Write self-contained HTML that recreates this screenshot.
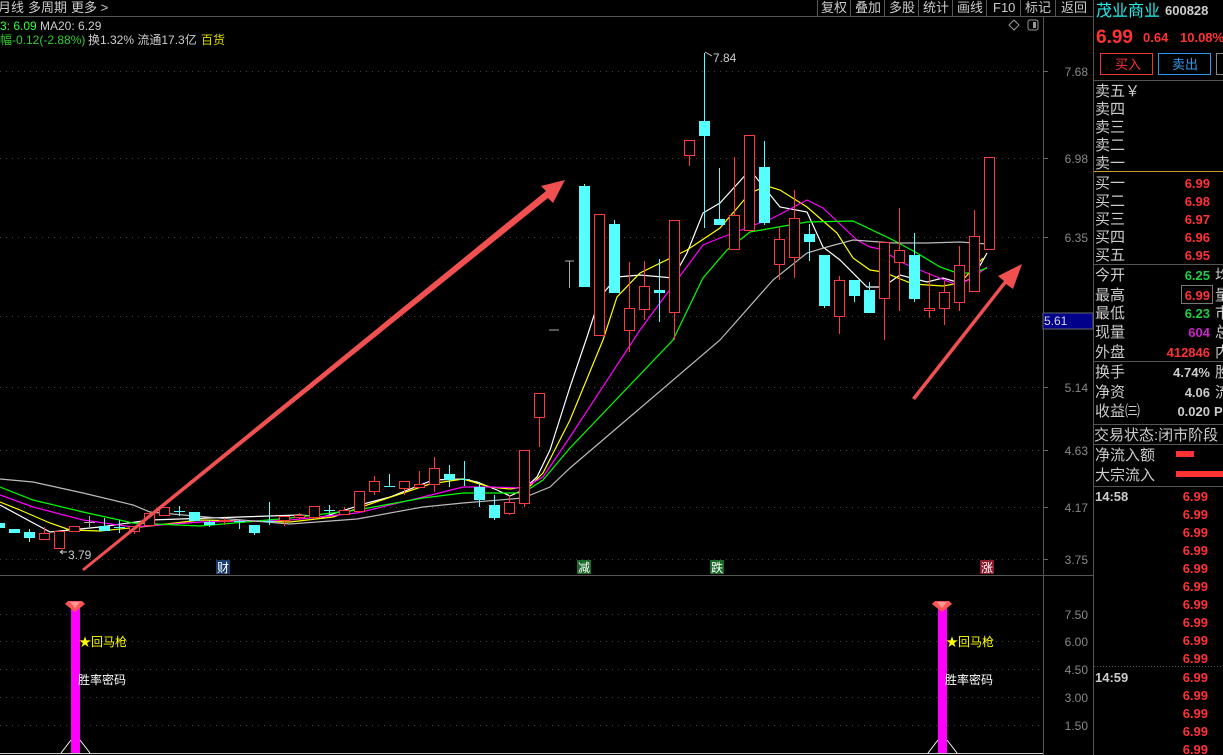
<!DOCTYPE html>
<html><head><meta charset="utf-8"><style>
body{margin:0;background:#000;width:1223px;height:755px;overflow:hidden;font-family:"Liberation Sans","Noto Sans CJK SC",sans-serif;}
svg{position:absolute;left:0;top:0}
text{font-family:"Liberation Sans","Noto Sans CJK SC",sans-serif}
</style></head><body>
<svg id="s" width="1223" height="755" xmlns="http://www.w3.org/2000/svg">
<rect width="1223" height="755" fill="#000"/>
<!-- top bar -->
<line x1="0" y1="16.5" x2="1093" y2="16.5" stroke="#555"/>
<g fill="#ccc" font-size="13">
<text x="-2" y="12">月线</text><text x="28" y="12">多周期</text><text x="71" y="12">更多 &gt;</text>
<text x="821" y="12">复权</text><text x="855" y="12">叠加</text><text x="889" y="12">多股</text><text x="923" y="12">统计</text><text x="957" y="12">画线</text><text x="993" y="12">F10</text><text x="1025" y="12">标记</text><text x="1061" y="12">返回</text>
</g>
<g stroke="#555"><line x1="817.5" y1="0" x2="817.5" y2="16"/><line x1="850.5" y1="0" x2="850.5" y2="16"/><line x1="884.5" y1="0" x2="884.5" y2="16"/><line x1="918.5" y1="0" x2="918.5" y2="16"/><line x1="952.5" y1="0" x2="952.5" y2="16"/><line x1="986.5" y1="0" x2="986.5" y2="16"/><line x1="1020.5" y1="0" x2="1020.5" y2="16"/><line x1="1055.5" y1="0" x2="1055.5" y2="16"/></g>
<path d="M1014 20 l5 5 l-5 5 l-5 -5z" fill="none" stroke="#999"/>
<rect x="1028" y="20" width="10" height="10" rx="2" fill="none" stroke="#999"/><rect x="1033" y="22" width="3" height="6" fill="#999"/>
<text x="0" y="30" font-size="12" fill="#3f3">3: 6.09</text><text x="40" y="30" font-size="12" fill="#ccc">MA20: 6.29</text>
<text x="0" y="44" font-size="12" fill="#3c3">幅-0.12(-2.88%)</text><text x="88" y="44" font-size="12" fill="#ccc">换1.32% 流通17.3亿</text><text x="201" y="44" font-size="12" fill="#dd0">百货</text>
<!-- axes -->
<line x1="1043.5" y1="17" x2="1043.5" y2="755" stroke="#555"/>
<line x1="1093.5" y1="0" x2="1093.5" y2="755" stroke="#555"/>
<line x1="0" y1="575.5" x2="1093" y2="575.5" stroke="#555"/>
<g stroke="#444" stroke-dasharray="1,5">
<line x1="0" y1="71.5" x2="1043" y2="71.5"/><line x1="0" y1="158.5" x2="1043" y2="158.5"/><line x1="0" y1="237.5" x2="1043" y2="237.5"/><line x1="0" y1="316.5" x2="1043" y2="316.5"/><line x1="0" y1="387.5" x2="1043" y2="387.5"/><line x1="0" y1="450.5" x2="1043" y2="450.5"/><line x1="0" y1="507.5" x2="1043" y2="507.5"/><line x1="0" y1="559.5" x2="1043" y2="559.5"/>
<line x1="0" y1="614.5" x2="1043" y2="614.5"/><line x1="0" y1="641.5" x2="1043" y2="641.5"/><line x1="0" y1="669.5" x2="1043" y2="669.5"/><line x1="0" y1="697.5" x2="1043" y2="697.5"/><line x1="0" y1="725.5" x2="1043" y2="725.5"/>
</g>
<g stroke="#666"><line x1="1043" y1="71.5" x2="1048" y2="71.5"/><line x1="1043" y1="158.5" x2="1048" y2="158.5"/><line x1="1043" y1="237.5" x2="1048" y2="237.5"/><line x1="1043" y1="387.5" x2="1048" y2="387.5"/><line x1="1043" y1="450.5" x2="1048" y2="450.5"/><line x1="1043" y1="507.5" x2="1048" y2="507.5"/><line x1="1043" y1="559.5" x2="1048" y2="559.5"/></g>
<g fill="#888" font-size="12" text-anchor="end">
<text x="1088" y="76">7.68</text><text x="1088" y="163">6.98</text><text x="1088" y="242">6.35</text><text x="1088" y="392">5.14</text><text x="1088" y="455">4.63</text><text x="1088" y="512">4.17</text><text x="1088" y="564">3.75</text>
<text x="1088" y="619">7.50</text><text x="1088" y="646">6.00</text><text x="1088" y="674">4.50</text><text x="1088" y="702">3.00</text><text x="1088" y="730">1.50</text>
</g>
<rect x="1043" y="313" width="50" height="16" fill="#00008a" stroke="#666"/><text x="1044" y="325" font-size="12" fill="#ddd">5.61</text>
<g id="ma" fill="none" stroke-width="1.2"></g>
<g id="cd"></g>
<text x="713" y="62" font-size="12" fill="#ccc">7.84</text><path d="M705 52 l7 4" stroke="#ccc"/>
<text x="68" y="559" font-size="12" fill="#ccc">3.79</text><path d="M60 552 h7 M60 552 l3 -2 M60 552 l3 2" stroke="#ccc" fill="none"/>
<!-- arrows -->
<g fill="#f05050" stroke="none">
<path d="M82 569 L84 571 L548 198 L553 203 L565 180 L541 186 L546 191 Z"/>
<path d="M912 398 L915 400 L1006 284 L1013 289 L1022 264 L998 276 L1004 281 Z"/>
</g>
<!-- markers -->
<rect x="216" y="560" width="14" height="14" fill="#1a3a6a"/><text x="217" y="572" font-size="12" fill="#fff">财</text>
<rect x="577" y="560" width="14" height="14" fill="#1a6a2a"/><text x="578" y="572" font-size="12" fill="#fff">减</text>
<rect x="710" y="560" width="14" height="14" fill="#1a6a2a"/><text x="711" y="572" font-size="12" fill="#fff">跌</text>
<rect x="980" y="560" width="14" height="14" fill="#8a1a2a"/><text x="981" y="572" font-size="12" fill="#fff">涨</text>
<!-- bottom indicator -->
<line x1="0" y1="753.5" x2="1043" y2="753.5" stroke="#ccc"/>
<g>
<rect x="71" y="607" width="9" height="146" fill="#f0f"/>
<path d="M61 753 L71 740 M80 740 L90 753" stroke="#fff"/>
<path d="M68 601 h14 l3 3 l-10 8 l-10 -8z" fill="#f55"/><path d="M70 602 h10 l-5 6z" fill="#f99"/>
<text x="79" y="646" font-size="12" fill="#ff0">★回马枪</text><text x="78" y="684" font-size="12" fill="#fff">胜率密码</text>
<rect x="938" y="607" width="9" height="146" fill="#f0f"/>
<path d="M928 753 L938 740 M947 740 L957 753" stroke="#fff"/>
<path d="M935 601 h14 l3 3 l-10 8 l-10 -8z" fill="#f55"/><path d="M937 602 h10 l-5 6z" fill="#f99"/>
<text x="946" y="646" font-size="12" fill="#ff0">★回马枪</text><text x="945" y="684" font-size="12" fill="#fff">胜率密码</text>
</g>
<!-- right panel -->
<text x="1096" y="16" font-size="16" fill="#2ee">茂业商业</text><text x="1165" y="15" font-size="13" font-weight="bold" fill="#ccc">600828</text>
<text x="1096" y="43" font-size="19" font-weight="bold" fill="#f33">6.99</text><text x="1143" y="42" font-size="13" font-weight="bold" fill="#f33">0.64</text><text x="1180" y="42" font-size="13" font-weight="bold" fill="#f33">10.08%</text>
<rect x="1100.5" y="53.5" width="52" height="21" fill="none" stroke="#e33"/><text x="1115" y="69" font-size="13" fill="#f33">买入</text>
<rect x="1158.5" y="53.5" width="52" height="21" fill="none" stroke="#39e"/><text x="1172" y="69" font-size="13" fill="#39e">卖出</text>
<rect x="1216.5" y="53.5" width="10" height="21" fill="none" stroke="#888"/>
<g stroke="#555"><line x1="1094" y1="80.5" x2="1223" y2="80.5"/><line x1="1094" y1="264.5" x2="1223" y2="264.5"/><line x1="1094" y1="361.5" x2="1223" y2="361.5"/><line x1="1094" y1="424.5" x2="1223" y2="424.5"/><line x1="1094" y1="444.5" x2="1223" y2="444.5"/><line x1="1094" y1="486.5" x2="1223" y2="486.5"/></g>
<line x1="1094" y1="171.5" x2="1223" y2="171.5" stroke="#c93"/>
<line x1="1094" y1="666.5" x2="1223" y2="666.5" stroke="#555" stroke-dasharray="1,2"/>
<g fill="#ccc" font-size="15">
<text x="1095" y="96">卖五￥</text><text x="1095" y="114">卖四</text><text x="1095" y="132">卖三</text><text x="1095" y="150">卖二</text><text x="1095" y="168">卖一</text>
<text x="1095" y="188">买一</text><text x="1095" y="206">买二</text><text x="1095" y="224">买三</text><text x="1095" y="242">买四</text><text x="1095" y="260">买五</text>
<text x="1095" y="280">今开</text><text x="1095" y="300">最高</text><text x="1095" y="318">最低</text><text x="1095" y="337">现量</text><text x="1095" y="357">外盘</text>
<text x="1095" y="377">换手</text><text x="1095" y="397">净资</text><text x="1095" y="416">收益㈢</text>
<text x="1094" y="440">交易状态:闭市阶段</text>
<text x="1095" y="460">净流入额</text><text x="1095" y="480">大宗流入</text>
<text x="1215" y="280">均</text><text x="1215" y="300">量</text><text x="1215" y="318">市</text><text x="1215" y="337">总</text><text x="1215" y="357">内</text><text x="1215" y="377">股</text><text x="1215" y="397">流</text>
</g>
<text x="1214" y="416" font-size="13" font-weight="bold" fill="#ccc">P</text>
<g font-size="13" font-weight="bold" text-anchor="end">
<text x="1210" y="188" fill="#f33">6.99</text><text x="1210" y="206" fill="#f33">6.98</text><text x="1210" y="224" fill="#f33">6.97</text><text x="1210" y="242" fill="#f33">6.96</text><text x="1210" y="260" fill="#f33">6.95</text>
<text x="1210" y="280" fill="#2c4">6.25</text><text x="1210" y="300" fill="#f33">6.99</text><text x="1210" y="318" fill="#2c4">6.23</text><text x="1210" y="337" fill="#c2c">604</text><text x="1210" y="357" fill="#f33">412846</text>
<text x="1210" y="377" fill="#ccc">4.74%</text><text x="1210" y="397" fill="#ccc">4.06</text><text x="1210" y="416" fill="#ccc">0.020</text>
</g>
<rect x="1181.5" y="285.5" width="31" height="18" fill="none" stroke="#777"/>
<rect x="1176" y="451" width="18" height="6" fill="#f33"/><rect x="1176" y="471" width="47" height="6" fill="#f33"/>
<g id="tk" font-size="13" font-weight="bold"></g>
</svg>
<script>
var NS="http://www.w3.org/2000/svg",s=document.getElementById('s');
function el(p,t,a){var e=document.createElementNS(NS,t);for(var k in a)e.setAttribute(k,a[k]);p.appendChild(e);return e;}
var cd=document.getElementById('cd');
var C=[[-1,523,528,523,528,'c'],[14,529,533,529,533,'c'],[29,532,538,529,542,'c'],[44,533,539,527,539,'r'],[59,531,548,531,548,'r'],[74,526,531,526,531,'r'],[89,522,523,516,527,'w'],[104,526,531,518,531,'c'],[119,527,528,520,533,'c'],[134,526,531,526,534,'r'],[149,513,525,513,525,'r'],[164,507,515,507,515,'r'],[179,511,512,506,516,'c'],[194,512,521,512,521,'c'],[209,522,525,520,527,'c'],[224,520,521,518,525,'r'],[239,521,522,520,529,'c'],[254,525,533,525,535,'c'],[269,521,522,502,525,'c'],[284,516,520,516,526,'r'],[299,515,517,513,519,'r'],[314,506,517,506,517,'r'],[329,510,511,505,515,'c'],[344,510,514,507,514,'r'],[359,491,511,491,511,'r'],[374,481,491,476,495,'r'],[389,486,487,474,487,'c'],[404,481,488,481,495,'r'],[419,484,487,471,487,'r'],[434,468,484,457,492,'r'],[449,474,480,465,487,'c'],[464,479,480,461,486,'c'],[479,487,500,482,507,'c'],[494,505,518,495,520,'c'],[509,502,513,495,515,'r'],[524,450,503,450,507,'r'],[539,393,417,393,447,'r'],
[584,186,287,184,287,'c'],[599,214,335,214,335,'r'],[614,224,293,220,293,'c'],[629,308,330,262,352,'r'],[644,286,309,261,320,'r'],[659,290,293,259,322,'c'],[674,220,312,220,340,'r'],[689,140,155,140,166,'r'],[704,121,136,53,228,'c'],[719,219,225,168,225,'c'],[734,215,249,157,249,'r'],[749,135,230,135,230,'r'],[764,167,223,141,225,'c'],[779,239,264,227,280,'r'],[794,218,257,190,278,'r'],[809,234,242,224,261,'c'],[824,255,306,255,308,'c'],[839,280,316,276,334,'r'],[854,280,296,280,302,'c'],[869,290,313,282,313,'c'],[884,242,298,242,340,'r'],[899,250,262,208,311,'r'],[914,255,299,233,302,'c'],[929,308,310,273,318,'r'],[944,292,308,281,325,'r'],[959,265,302,246,311,'r'],[974,236,291,210,292,'r'],[989,157,249,157,249,'r']];
C.forEach(function(c){var x=c[0],col=c[5]=='r'?'#ff3a3a':c[5]=='c'?'#55ffff':'#aaa';
el(cd,'line',{x1:x+.5,x2:x+.5,y1:c[3],y2:c[4],stroke:col});
var h=Math.max(1,c[2]-c[1]);
if(c[5]=='r')el(cd,'rect',{x:x-4.5,y:c[1]+.5,width:10,height:h,fill:'#000',stroke:col});
else el(cd,'rect',{x:x-5,y:c[1],width:11,height:h,fill:col});});
el(cd,'path',{d:'M565 261h9M569.5 261v27M549 330h10',stroke:'#aaa',fill:'none'});
var ma=document.getElementById('ma');
var L={'#fff':[[0,505],[50,532],[100,527],[150,520],[300,515],[323,517],[367,503],[390,497],[433,480],[463,479],[477,482],[497,490],[510,496],[523,490],[537,477],[550,450],[570,387],[587,337],[600,297],[617,277],[640,275],[673,278],[687,253],[703,213],[720,203],[750,170],[780,207],[807,212],[823,247],[840,260],[867,287],[883,287],[900,275],[927,282],[943,278],[960,283],[973,278],[987,253]],
'#ff0':[[0,502],[20,510],[50,523],[70,530],[100,531],[150,526],[200,520],[290,522],[333,517],[373,503],[430,484],[463,479],[490,487],[510,489],[530,486],[543,473],[570,420],[603,340],[617,297],[640,273],[687,250],[720,228],[750,193],[767,186],[780,190],[807,207],[837,233],[853,258],[870,270],[883,272],[913,284],[943,286],[960,283],[983,258]],
'#f0f':[[0,495],[33,507],[83,520],[133,527],[200,522],[290,520],[357,513],[423,497],[463,487],[490,487],[523,488],[543,477],[570,437],[640,330],[657,307],[703,245],[720,238],[773,218],[807,200],[823,208],[857,240],[870,247],[880,249],[903,263],[927,273],[957,285],[973,278],[987,267]],
'#0f0':[[0,487],[33,500],[83,512],[133,523],[200,526],[290,518],[357,510],[423,498],[463,493],[523,493],[543,480],[570,448],[673,340],[703,278],[727,250],[750,232],[807,222],[853,221],[893,240],[917,253],[940,267],[957,273],[973,273],[987,268]],
'#bbb':[[0,479],[33,482],[83,493],[133,505],[150,512],[183,515],[290,524],[357,519],[423,507],[463,503],[523,498],[550,487],[570,468],[720,340],[773,280],[807,253],[827,247],[853,240],[893,243],[927,243],[960,242],[987,244]]};
for(var k in L)el(ma,'polyline',{points:L[k].map(function(p){return p.join(',')}).join(' '),stroke:k});
var tk=document.getElementById('tk');
function t(x,y,s,c,a){var e=el(tk,'text',{x:x,y:y,fill:c});if(a)e.setAttribute('text-anchor',a);e.textContent=s;}
t(1095,501,'14:58','#ccc');t(1095,682,'14:59','#ccc');
for(var i=0;i<15;i++){var y=i<10?501+i*18:682+(i-10)*18;t(1208,y,'6.99','#f33','end');}
</script>
</body></html>
